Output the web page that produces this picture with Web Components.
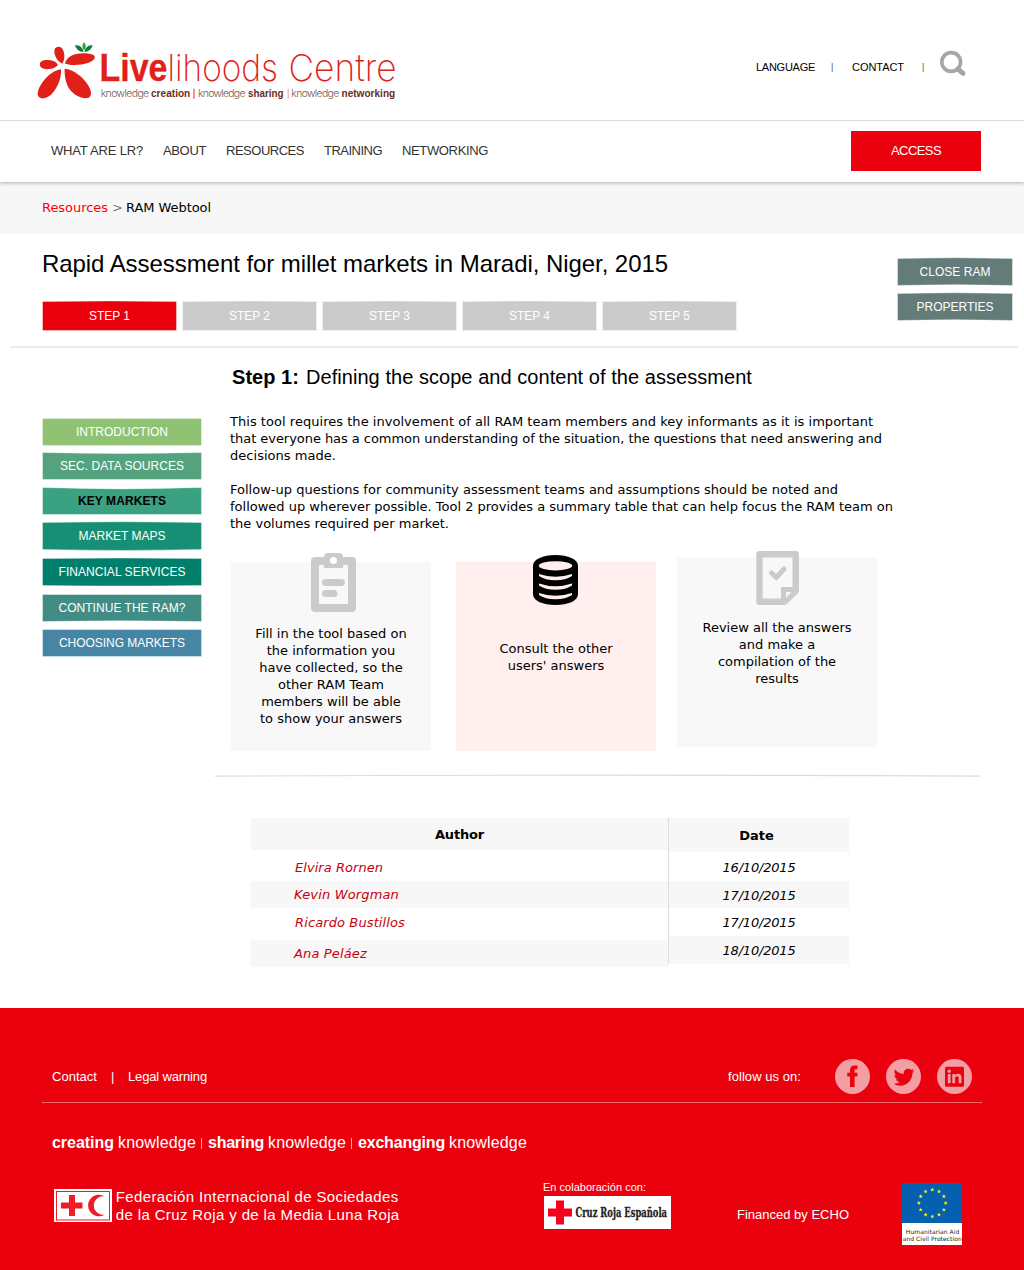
<!DOCTYPE html>
<html lang="en">
<head>
<meta charset="utf-8">
<title>Livelihoods Centre - RAM Webtool</title>
<style>
  body { margin: 0; background: #fff; color: #000; font-family: "Liberation Sans", Arial, sans-serif; }
</style>
</head>
<body>
<lc-header></lc-header>
<lc-nav></lc-nav>
<lc-breadcrumb></lc-breadcrumb>
<ram-title></ram-title>
<ram-workspace></ram-workspace>
<lc-footer></lc-footer>

<script>
function define(name, html) {
  const tpl = document.createElement('template');
  tpl.innerHTML = html;
  customElements.define(name, class extends HTMLElement {
    connectedCallback() {
      if (this.shadowRoot) return;
      this.attachShadow({ mode: 'open' }).appendChild(tpl.content.cloneNode(true));
    }
  });
}

/* Header with the logo and the utility links */
define('lc-header', `
<style>
  :host { display: flex; height: 120px; border-bottom: 1px solid #ddd; align-items: flex-start; font-size: 11px; line-height: 14px; }
  .logo { margin: 35px 0 0 30px; flex: none; overflow: visible; }
  .a { margin: 60px 0 0 346px; }
  .bar { width: 2px; margin: 60px 0 0 16px; font-size: 9px; color: #555; }
  .b { margin: 60px 0 0 19px; }
  .bar2 { margin-left: 18px; }
  .search { margin: 50px 0 0 15px; }
</style>
<svg class="logo" width="380" height="75" viewBox="0 0 380 75">
  <g transform="scale(.33333)" fill="#e2201a">
    <path d="M79 37C92 31 102 43 103 60C104 72 101 80 97 86C83 79 74 64 73 50C73 43 75 39 79 37Z"/>
    <path d="M105 86C109 66 130 55 160 55C182 55 197 60 194 69C189 85 140 96 105 86Z"/>
    <path d="M84 89C76 76 60 74 46 75C33 77 29 82 30 91C31 100 44 104 57 102C69 101 78 97 84 89Z"/>
    <path d="M93 103C96 133 77 170 57 184C43 193 24 193 23 178C22 155 56 108 93 103Z"/>
    <path d="M104 101C132 103 160 128 174 150C184 167 187 182 176 188C158 194 133 180 120 164C108 148 103 124 104 101Z"/>
    <g fill="#0b8030">
      <path d="M135 31C149 29 159 38 160 51C147 51 139 43 135 31Z"/>
      <path d="M162 21C169 29 169 39 162 46C155 38 156 29 162 21Z" fill="#2fa13b"/>
      <path d="M188 31C174 29 165 39 163 51C176 51 184 43 188 31Z"/>
    </g>
    <path d="M490.500 161h3v30h-3z" /><path d="M773 161h3v30h-3z" fill="#f2a09c"/>
  </g>
  <g fill="#e2201a" font-size="37" font-family="Inter, 'Liberation Sans', sans-serif">
    <text x="69.500" y="46.3" font-family="Liberation Sans" font-weight="700" font-size="38.5" textLength="68" lengthAdjust="spacingAndGlyphs" stroke="#e2201a" stroke-width=".3">Live</text>
    <text x="137.5" y="46.3" font-weight="200" textLength="110.5" lengthAdjust="spacingAndGlyphs">lihoods</text>
    <text x="258.5" y="46.3" font-weight="200" textLength="108" lengthAdjust="spacingAndGlyphs">Centre</text>
  </g>
  <g font-size="10.5" font-family="Inter, 'Liberation Sans', sans-serif" font-weight="300" fill="#7c554b">
    <text x="70.7" y="62" textLength="48.5">knowledge</text>
    <text x="168" y="62" textLength="47.5">knowledge</text>
    <text x="261.3" y="62" textLength="48">knowledge</text>
  </g>
  <g font-size="10.5" font-family="Liberation Sans" font-weight="700" fill="#6b2c20">
    <text x="121" y="62" textLength="39.3" lengthAdjust="spacingAndGlyphs">creation</text>
    <text x="218" y="62" textLength="35.5" lengthAdjust="spacingAndGlyphs">sharing</text>
    <text x="311.5" y="62" textLength="53.7" lengthAdjust="spacingAndGlyphs">networking</text>
  </g>
</svg>
<fit-line class="a" w="59">LANGUAGE</fit-line>
<span class="bar">|</span>
<fit-line class="b" w="52">CONTACT</fit-line>
<span class="bar bar2">|</span>
<svg class="search" width="28" height="28" viewBox="0 0 28 28" fill="none" stroke="#a6a6a6">
  <circle cx="12.2" cy="12" r="9.4" stroke-width="3.6"/>
  <path d="M18.8 18.8L24 23.4" stroke-width="5" stroke-linecap="round"/>
</svg>`);

/* Main navigation bar */
define('lc-nav', `
<style>
  :host { display: flex; height: 61px; align-items: center; background: #fff; font-size: 13px; color: #333;
          box-shadow: 0 2px 3px rgba(0,0,0,.2); position: relative; }
  nav { display: flex; gap: 20px; margin-left: 51px; padding-bottom: 2px; }
  button { all: unset; box-sizing: border-box; width: 130px; height: 40px; margin: 0 0 1px 363px; background: #eb000d; color: #fff;
           display: flex; justify-content: center; align-items: center; padding-bottom: 1px; }
</style>
<nav><fit-line w="92">WHAT ARE LR?</fit-line><fit-line w="43">ABOUT</fit-line><fit-line w="78">RESOURCES</fit-line><fit-line w="58">TRAINING</fit-line><fit-line w="86">NETWORKING</fit-line></nav>
<button><fit-line w="50">ACCESS</fit-line></button>`);

define('lc-breadcrumb', `
<style>
  :host { display: flex; height: 52px; box-sizing: border-box; padding: 17px 0 0 42px; gap: 4px; background: #f7f7f7;
          font: 13px/17px "DejaVu Sans", sans-serif; }
  .r { color: #f00; } .g { color: #777; width: 10px; }
</style>
<fit-line class="r" w="66">Resources</fit-line><span class="g">&gt;</span><fit-line w="85">RAM Webtool</fit-line>`);

/* Coloured label button whose top and bottom edges may bow: attributes w, h, color, top, bottom, tw */
customElements.define('ram-button', class extends HTMLElement {
  connectedCallback() {
    if (this.shadowRoot) return;
    const n = k => parseFloat(this.getAttribute(k) || 0);
    const w = n('w'), h = n('h'), t = n('top') * 2, b = n('bottom') * 2;
    const d = 'M0.5 0.5Q' + w / 2 + ' ' + (0.5 + t) + ' ' + (w - 0.5) + ' 0.5V' + (h - 0.5) + 'Q' + w / 2 + ' ' + (h - 0.5 + b) + ' 0.5 ' + (h - 0.5) + 'Z';
    this.attachShadow({ mode: 'open' }).innerHTML = `
<style>
  :host { display: grid; flex: none; width: ${w}px; height: ${h}px; color: #fff; font-size: 12px; line-height: 14px; }
  :host([active]) { color: #000; font-weight: 700; }
  svg, .label { grid-area: 1 / 1; }
  svg { overflow: visible; }
  .label { place-self: center; z-index: 1; }
</style>
<svg width="${w}" height="${h}"><path d="${d}" fill="${this.getAttribute('color')}" stroke="rgba(255,255,255,.4)" stroke-width="1"/></svg>
<fit-line class="label" w="${n('tw')}"><slot></slot></fit-line>`;
  }
});

/* Assessment title, step tabs and page actions */
define('ram-title', `
<style>
  :host { display: flex; justify-content: space-between; height: 112px; box-sizing: border-box; padding: 15px 11px 0 42px; }
  h1 { margin: 0; font-size: 24px; line-height: 30px; font-weight: 400; height: 52px; }
  .steps { display: flex; gap: 5px; }
  .actions { display: flex; flex-direction: column; gap: 7px; padding-top: 9px; }
</style>
<div>
  <h1><fit-line w="626">Rapid Assessment for millet markets in Maradi, Niger, 2015</fit-line></h1>
  <div class="steps">
    <ram-button w="135" h="30" top="-.6" color="#eb000d" tw="41">STEP 1</ram-button>
    <ram-button w="135" h="30" top="-.6" color="#cbcbcb" tw="41">STEP 2</ram-button>
    <ram-button w="135" h="30" top="-.6" color="#cbcbcb" tw="41">STEP 3</ram-button>
    <ram-button w="135" h="30" top="-.6" color="#cbcbcb" tw="41">STEP 4</ram-button>
    <ram-button w="135" h="30" top="-.6" color="#cbcbcb" tw="41">STEP 5</ram-button>
  </div>
</div>
<div class="actions">
  <ram-button w="116" h="28" top="-.8" bottom="-.8" color="#647c79" tw="71">CLOSE RAM</ram-button>
  <ram-button w="116" h="28" top="-.8" bottom="-.8" color="#647c79" tw="77">PROPERTIES</ram-button>
</div>`);

/* Card with an icon over its top edge */
define('ram-card', `
<style>
  :host { display: flex; flex-direction: column; align-items: center; flex: none; width: 200px; height: 189px; background: #f8f8f8;
          font: 13px/17px "DejaVu Sans", sans-serif; text-align: center; white-space: nowrap; }
</style>
<slot name="icon"></slot><div><slot></slot></div>`);

define('ram-workspace', `
<style>
  :host { display: block; }
  .rule { height: 2px; background: #ededed; margin: 0 6px 0 10px; }
  .cols { display: flex; height: 660px; }
  .side { width: 160px; margin: 70px 0 0 42px; display: flex; flex-direction: column; }
  .main { width: 790px; margin-left: 13px; }
  h2 { display: flex; gap: 7px; margin: 17px 0 0 17px; font-size: 20px; line-height: 24px; font-weight: 400; }
  p { margin: 0 0 17px 15px; font: 13px/17px "DejaVu Sans", sans-serif; white-space: nowrap; }
  h2 + p { margin-top: 24px; }
  .cards { display: flex; align-items: flex-start; margin: 30px 0 0 16px; }
  .cards svg { display: block; overflow: visible; flex: none; }
  .line { display: block; margin-top: 22px; }
  author-table { margin: 40px 0 0 36px; }
</style>
<div class="rule"></div>
<div class="cols">
  <div class="side">
    <ram-button w="160" h="28" color="#8fc373" tw="92">INTRODUCTION</ram-button>
    <ram-button w="160" h="28" top="1" color="#55a37e" tw="124" style="margin-top:6px">SEC. DATA SOURCES</ram-button>
    <ram-button active w="160" h="28" top="1.4" color="#3aa182" tw="88" style="margin-top:7px">KEY MARKETS</ram-button>
    <ram-button w="160" h="28" top="-.8" bottom="1" color="#178f75" tw="87" style="margin-top:7px">MARKET MAPS</ram-button>
    <ram-button w="160" h="28" top="-.5" bottom=".5" color="#007f6c" tw="127" style="margin-top:8px">FINANCIAL SERVICES</ram-button>
    <ram-button w="160" h="28" bottom="-.7" color="#418d85" tw="127" style="margin-top:8px">CONTINUE THE RAM?</ram-button>
    <ram-button w="160" h="28" color="#4686a4" tw="126" style="margin-top:7px">CHOOSING MARKETS</ram-button>
  </div>
  <div class="main">
    <h2><fit-line w="67"><b>Step 1:</b></fit-line><fit-line w="446">Defining the scope and content of the assessment</fit-line></h2>
    <p><fit-line w="643">This tool requires the involvement of all RAM team members and key informants as it is important</fit-line><fit-line w="652">that everyone has a common understanding of the situation, the questions that need answering and</fit-line><fit-line w="106">decisions made.</fit-line></p>
    <p><fit-line w="608">Follow-up questions for community assessment teams and assumptions should be noted and</fit-line><fit-line w="663">followed up wherever possible. Tool 2 provides a summary table that can help focus the RAM team on</fit-line><fit-line w="219">the volumes required per market.</fit-line></p>
    <div class="cards">
      <ram-card>
        <svg slot="icon" width="45" height="59" viewBox="0 0 45 59" style="margin:-9px 0 13px 5px">
          <rect x="4" y="8" width="37" height="47" fill="#f8f8f8" stroke="#cbcbcb" stroke-width="8" stroke-linejoin="round"/>
          <path d="M13 15V3.500Q13 0 17 0H28Q32 0 32 3.500V15Z" fill="#cbcbcb"/>
          <circle cx="22.500" cy="7.500" r="3.600" fill="#fff"/>
          <path d="M14.500 29.500H30.500M14.500 40.500H23" stroke="#cbcbcb" stroke-width="7" stroke-linecap="round"/>
        </svg>
        Fill in the tool based on<br>the information you<br>have collected, so the<br>other RAM Team<br>members will be able<br>to show your answers
      </ram-card>
      <ram-card style="margin-left:25px;background:#ffefee">
        <svg slot="icon" width="45" height="50" viewBox="0 0 45 50" style="margin:-7px 1px 35px 0">
          <path d="M0 11C0 4 10 0 22.500 0S45 4 45 11V39C45 46 35 50 22.500 50S0 46 0 39Z"/>
          <g fill="#ffefee">
            <ellipse cx="22.500" cy="10.800" rx="16.700" ry="4.600"/>
            <path d="M6 19Q22.500 24.500 39 19V21Q33 25.200 22.500 25.200T6 21Z"/>
            <path d="M6 28.500Q22.500 34 39 28.500V30.500Q33 34.700 22.500 34.700T6 30.500Z"/>
            <path d="M6 38Q22.500 43.500 39 38V40Q33 44.200 22.500 44.200T6 40Z"/>
          </g>
        </svg>
        Consult the other<br>users' answers
      </ram-card>
      <ram-card style="margin:-4px 0 0 21px">
        <svg slot="icon" width="43" height="54" viewBox="0 0 43 54" style="margin:-7px 0 14px 1px">
          <path d="M3.500 3.250H39.700V40L28.500 50.700H3.500Z" fill="#f8f8f8" stroke="#cbcbcb" stroke-width="6.500" stroke-linejoin="round"/>
          <path d="M25 36H42V40L29 53H25Z" fill="#cbcbcb"/>
          <path d="M30 41H35.500L30 47Z" fill="#f8f8f8"/>
          <path d="M15.500 22L20.300 26.500L28 18" fill="none" stroke="#cbcbcb" stroke-width="5" stroke-linecap="round" stroke-linejoin="round"/>
        </svg>
        Review all the answers<br>and make a<br>compilation of the<br>results
      </ram-card>
    </div>
    <svg class="line" width="765" height="5" viewBox="0 0 765 5"><path d="M0 3.200Q382 1.200 765 3.200" fill="none" stroke="#dcdcdc" stroke-width="1.200"/></svg>
    <author-table></author-table>
  </div>
</div>`);

/* Two independent columns: their rows have slightly different heights */
define('author-table', `
<style>
  :host { display: flex; align-items: flex-start; font: italic 13px/17px "DejaVu Sans", sans-serif; }
  .col { display: flex; flex-direction: column; width: 417px; }
  .date { width: 180px; border-left: 1px solid #ddd; text-align: center; }
  .col > div { display: flex; align-items: center; box-sizing: border-box; height: var(--h); }
  .col > .g { background: #f7f7f7; }
  .col > .h { font-style: normal; font-weight: 700; justify-content: center; }
  .author { color: #c8000c; }
  .author .h { color: #000; }
  .date > div { justify-content: center; }
</style>
<div class="col author">
  <div class="g h" style="--h:32px"><fit-line w="49">Author</fit-line></div>
  <div style="--h:31px;padding:4px 0 0 44px"><fit-line w="88">Elvira Rornen</fit-line></div>
  <div class="g" style="--h:27px;padding-left:43px"><fit-line w="105">Kevin Worgman</fit-line></div>
  <div style="--h:32px;padding:0 0 3px 44px"><fit-line w="110">Ricardo Bustillos</fit-line></div>
  <div class="g" style="--h:27px;padding-left:43px"><fit-line w="73">Ana Peláez</fit-line></div>
</div>
<div class="col date">
  <div class="g h" style="--h:34px;padding-right:5px">Date</div>
  <div style="--h:29px;padding-top:2px"><fit-line w="73">16/10/2015</fit-line></div>
  <div class="g" style="--h:27px;padding-top:2px"><fit-line w="73">17/10/2015</fit-line></div>
  <div style="--h:28px"><fit-line w="73">17/10/2015</fit-line></div>
  <div class="g" style="--h:28px"><fit-line w="73">18/10/2015</fit-line></div>
</div>`);

/* Round social network badge */
customElements.define('social-badge', class extends HTMLElement {
  connectedCallback() {
    if (this.shadowRoot) return;
    const red = '#eb000d', pink = '#f39ea2';
    const glyphs = {
      facebook: `<path fill="${red}" d="M15 28V17.500H12.300V13.800H15V11.300C15 8.300 16.700 6.600 19.500 6.600H22.500V10.300H20.700C19.800 10.300 19.600 10.800 19.600 11.700V13.800H22.500L22.200 17.500H19.600V28Z"/>`,
      twitter: `<path fill="${red}" transform="translate(7.600 7.800) scale(.87)" d="M23.953 4.570a10 10 0 01-2.825.775 4.958 4.958 0 002.163-2.723c-.951.555-2.005.959-3.127 1.184a4.920 4.920 0 00-8.384 4.482C7.690 8.095 4.067 6.130 1.640 3.162a4.822 4.822 0 00-.666 2.475c0 1.710.870 3.213 2.188 4.096a4.904 4.904 0 01-2.228-.616v.060a4.923 4.923 0 003.946 4.827 4.996 4.996 0 01-2.212.085 4.936 4.936 0 004.604 3.417 9.867 9.867 0 01-6.102 2.105c-.390 0-.779-.023-1.170-.067a13.995 13.995 0 007.557 2.209c9.053 0 13.998-7.496 13.998-13.985 0-.210 0-.420-.015-.630A9.935 9.935 0 0024 4.590z"/>`,
      linkedin: `<rect x="8" y="7.700" width="19" height="20" rx="1.500" fill="${red}"/><g fill="${pink}"><circle cx="12.200" cy="12.300" r="1.700"/><path d="M10.800 15H13.600V24.300H10.800ZM15.300 15H18V16.400C18.700 15.300 19.700 14.800 21 14.800C23.400 14.800 24.500 16.200 24.500 18.800V24.300H21.700V19.300C21.700 18 21.200 17.300 20.100 17.300C18.800 17.300 18.100 18.100 18.100 19.500V24.300H15.300Z"/></g>`
    };
    this.attachShadow({ mode: 'open' }).innerHTML = `<style>:host{display:block}svg{display:block}</style>
<svg width="35" height="35" viewBox="0 0 35 35"><circle cx="17.500" cy="17.500" r="17.500" fill="${pink}"/>${glyphs[this.getAttribute('name')]}</svg>`;
  }
});

define('lc-footer', `
<style>
  :host { display: block; box-sizing: border-box; height: 262px; background: #eb000d; color: #fff; font-size: 13px; line-height: 16px; padding: 51px 42px 0; }
  .top { display: flex; align-items: center; height: 44px; padding: 0 10px 8px; box-sizing: border-box; border-bottom: 1px solid #f16a6c; }
  .pipe { width: 4px; margin: 0 13px 0 14px; }
  .follow { margin: 0 34px 0 auto; }
  .social { display: flex; gap: 16px; }
  .slogan { display: flex; margin: 30px 0 0 10px; font-size: 16px; line-height: 20px; height: 20px; }
  .slogan i { width: 1px; height: 11px; background: #f9a5a8; margin: 5px 6px 0 5px; }
  .logos { display: flex; align-items: flex-start; margin: 29px 0 0 10px; }
  .logos svg { display: block; flex: none; overflow: visible; }
  .echo { margin: 25px 53px 0 64px; }
</style>
<div class="top">
  <fit-line w="45">Contact</fit-line><span class="pipe">|</span><fit-line w="79">Legal warning</fit-line>
  <fit-line class="follow" w="73">follow us on:</fit-line>
  <div class="social"><social-badge name="facebook"></social-badge><social-badge name="twitter"></social-badge><social-badge name="linkedin"></social-badge></div>
</div>
<div class="slogan">
  <fit-line w="62"><b>creating</b></fit-line><fit-line w="78" style="margin-left:4px">knowledge</fit-line><i></i>
  <fit-line w="56"><b>sharing</b></fit-line><fit-line w="78" style="margin-left:4px">knowledge</fit-line><i></i>
  <fit-line w="87"><b>exchanging</b></fit-line><fit-line w="78" style="margin-left:4px">knowledge</fit-line>
</div>
<div class="logos">
  <svg width="352" height="50" viewBox="52 1182 352 50">
    <rect x="54" y="1189" width="58" height="33" fill="#fff"/>
    <rect x="56.500" y="1191.500" width="53" height="28.500" fill="none" stroke="#ee1c25"/>
    <path d="M69 1195h6v7.500h7.500v6h-7.500v7.500h-6v-7.500h-8v-6h8z" fill="#ee1c25"/>
    <path d="M104.500 1196.300A10.800 10.800 0 1 0 104.500 1214.700A9.300 9.300 0 1 1 104.500 1196.300Z" fill="#ee1c25"/>
    <g fill="#fff" font-family="Liberation Sans" font-size="15">
      <text x="115.700" y="1202" textLength="282.500">Federación Internacional de Sociedades</text>
      <text x="115.700" y="1220" textLength="283.500">de la Cruz Roja y de la Media Luna Roja</text>
    </g>
  </svg>
  <svg width="130" height="50" viewBox="543 1182 130 50" style="margin-left:139px">
    <text x="543" y="1191" fill="#fff" font-family="Liberation Sans" font-size="11" textLength="103">En colaboración con:</text>
    <rect x="544" y="1196" width="127" height="33" fill="#fff"/>
    <path d="M556 1200.500h8v8h8v8h-8v8h-8v-8h-8v-8h8z" fill="#f2051c"/>
    <text x="575.500" y="1217" fill="#222" font-family="DejaVu Serif, serif" font-weight="700" font-size="13.500" textLength="91.500" lengthAdjust="spacingAndGlyphs" stroke="#222" stroke-width=".3">Cruz Roja Española</text>
  </svg>
  <fit-line class="echo" w="112">Financed by ECHO</fit-line>
  <svg id="eu" width="60" height="63" viewBox="902 1182 60 63">
    <rect x="902" y="1183" width="60" height="62" fill="#fff"/>
    <rect x="902" y="1183" width="60" height="40" fill="#0560b0"/>
    <g id="stars" fill="#f8ec21"></g>
    <g fill="#222" font-family="DejaVu Sans" font-size="6">
      <text x="905.800" y="1234" textLength="53.500">Humanitarian Aid</text>
      <text x="902.700" y="1241" textLength="59">and Civil Protection</text>
    </g>
  </svg>
</div>`);

/* Ring of twelve stars on the flag */
(() => {
  const ring = document.querySelector('lc-footer').shadowRoot.getElementById('stars');
  let d = '';
  for (let i = 0; i < 12; i++) {
    const cx = 932.3 + 13.4 * Math.sin(i * Math.PI / 6), cy = 1203.1 - 13.4 * Math.cos(i * Math.PI / 6);
    for (let k = 0; k < 10; k++) {
      const r = k % 2 ? 1 : 2.1, a = k * Math.PI / 5;
      d += (k ? 'L' : 'M') + (cx + r * Math.sin(a)).toFixed(2) + ' ' + (cy - r * Math.cos(a)).toFixed(2);
    }
    d += 'Z';
  }
  const p = document.createElementNS('http://www.w3.org/2000/svg', 'path');
  p.setAttribute('d', d);
  ring.appendChild(p);
})();

/* One line of text whose letter spacing is tuned to fill the width given in w */
customElements.define('fit-line', class extends HTMLElement {
  connectedCallback() {
    if (this.shadowRoot) return;
    const w = parseFloat(this.getAttribute('w'));
    this.attachShadow({ mode: 'open' }).innerHTML =
      '<style>:host{display:block;flex:none;white-space:nowrap}span{display:inline-block}</style><span><slot></slot></span>';
    const span = this.shadowRoot.querySelector('span');
    const inner = this.querySelector('slot');
    const text = inner ? inner.assignedNodes().map(n => n.textContent).join('') : this.textContent;
    this.style.width = w + 'px';
    const natural = span.getBoundingClientRect().width;
    span.style.letterSpacing = ((w - natural) / text.trim().length).toFixed(3) + 'px';
  }
});
</script>
</body>
</html>
